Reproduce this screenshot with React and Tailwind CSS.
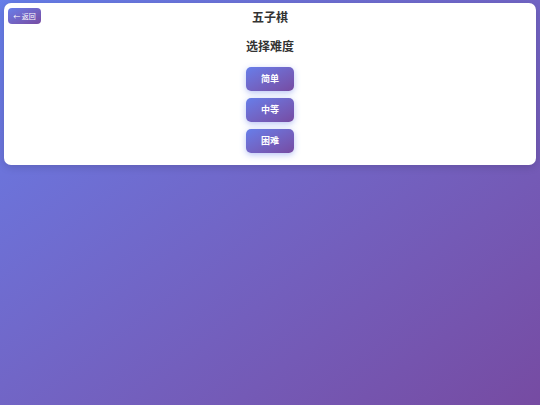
const FONT = "font-['Noto_Sans_CJK_SC','Noto_Sans',sans-serif]";

function LevelButton({ label }) {
  return (
    <button className="w-[48px] h-[24px] rounded-[5px] bg-gradient-to-br from-[#667eea] to-[#764ba2] text-white text-[9px] font-bold shadow-[0_2px_6px_rgba(102,126,234,0.45)]">
      {label}
    </button>
  );
}

export default function App() {
  return (
    <div className={`w-[540px] h-[405px] bg-gradient-to-br from-[#667eea] to-[#764ba2] pt-[3px] px-[4px] ${FONT}`}>
      <div className="relative bg-white rounded-[7px] shadow-[0_2px_8px_rgba(0,0,0,0.15)] h-[162px] pt-[5px]">
        <button className="absolute left-[4px] top-[5px] w-[33px] h-[16px] rounded-[4px] bg-gradient-to-br from-[#667eea] to-[#764ba2] text-white text-[7px] flex items-center justify-center leading-none">
          ← 返回
        </button>
        <h1 className="text-center text-[12px] font-bold text-[#333] leading-[18px]">五子棋</h1>
        <h2 className="text-center text-[12px] font-bold text-[#333] leading-[18px] mt-[11px]">选择难度</h2>
        <div className="flex flex-col items-center gap-[7px] mt-[12px]">
          <LevelButton label="简单" />
          <LevelButton label="中等" />
          <LevelButton label="困难" />
        </div>
      </div>
    </div>
  );
}
